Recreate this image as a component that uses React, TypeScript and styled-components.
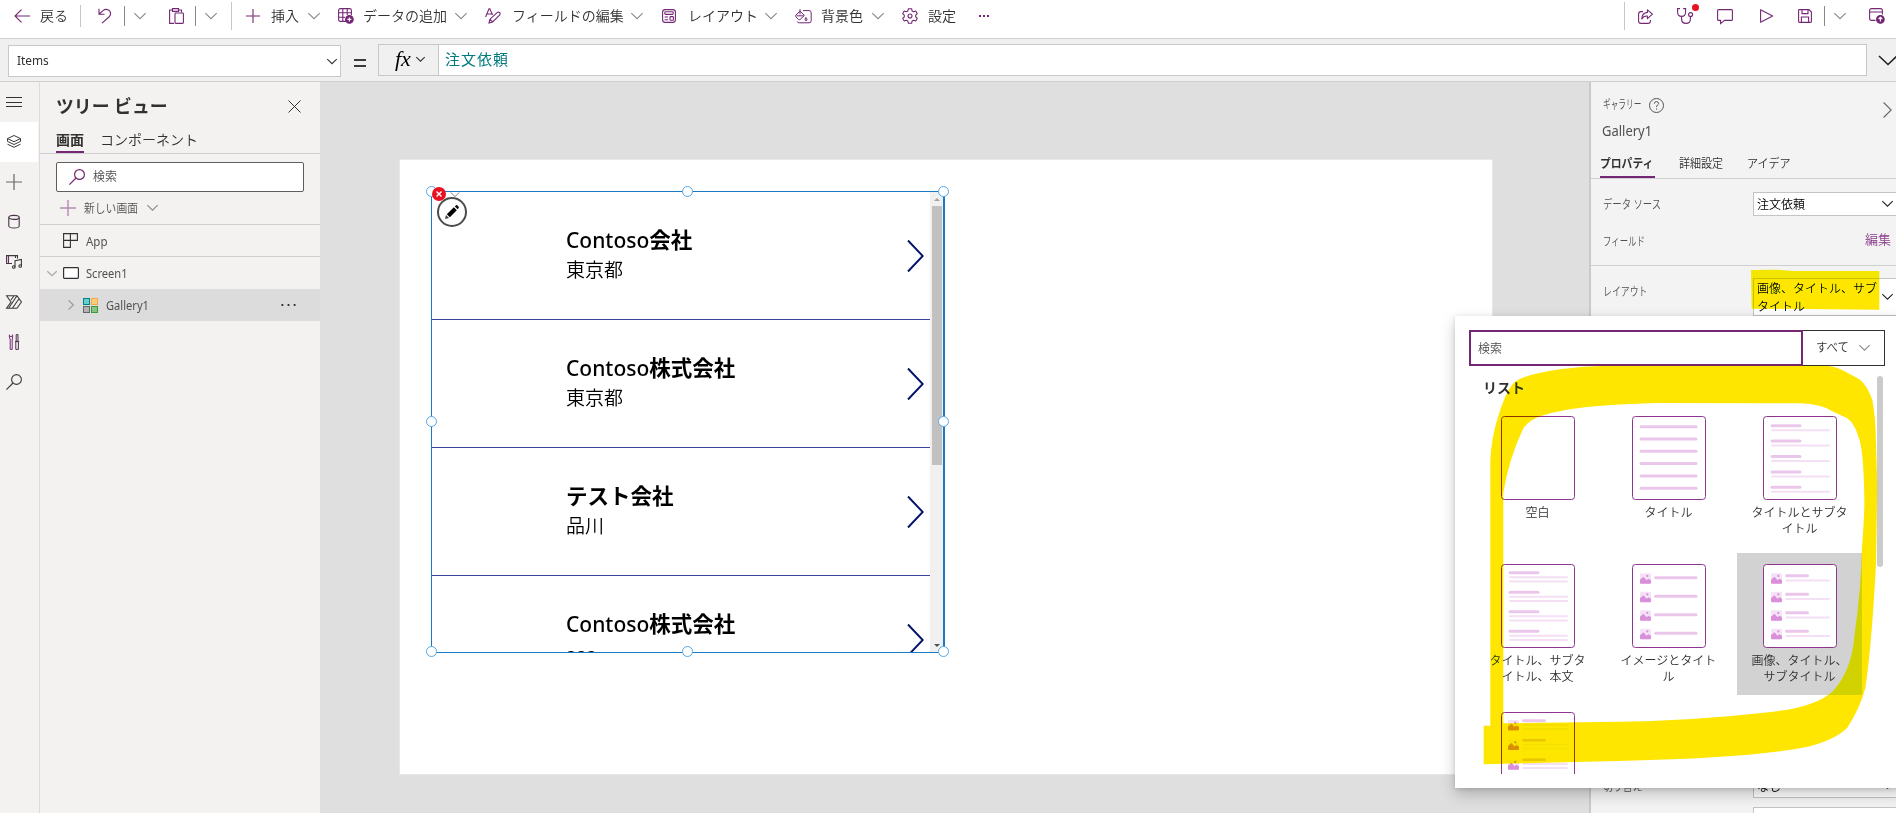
import React from "react";
import styled, { createGlobalStyle, css } from "styled-components";

const PURPLE = "#742774";
const JP = `"Noto Sans", "Noto Sans CJK JP", sans-serif`;

const Global = createGlobalStyle`
  *, *::before, *::after { box-sizing: border-box; }
  html, body { margin: 0; padding: 0; overflow: hidden; }
  body { font-family: ${JP}; color: #323130; font-size: 12px; }
`;

/* ---------- shared pieces ---------- */

const Text = styled.span<{ $size?: number; $color?: string; $weight?: number; $narrow?: number; $track?: number }>`
  display: inline-block;
  flex: none;
  white-space: nowrap;
  font-size: ${(p) => p.$size ?? 12}px;
  color: ${(p) => p.$color ?? "inherit"};
  font-weight: ${(p) => p.$weight ?? 350};
  letter-spacing: ${(p) => p.$track ?? 0}px;
  line-height: 1.3;
  transform-origin: left center;
  ${(p) => p.$narrow && css`transform: scaleX(${p.$narrow});`}
`;

const Svg = styled.svg<{ $ml?: number }>`
  display: block;
  flex: none;
  overflow: visible;
  margin-left: ${(p) => p.$ml ?? 0}px;
`;

type IconProps = { w: number; h?: number; color?: string; sw?: number; ml?: number; children: React.ReactNode };
const Icon = ({ w, h = w, color = PURPLE, sw = 1.1, ml, children }: IconProps) => (
  <Svg $ml={ml} width={w} height={h} viewBox={`0 0 ${w} ${h}`} fill="none" stroke={color} strokeWidth={sw}>
    {children}
  </Svg>
);

const Chevron = ({ w = 12, color = "#8a8a8a", sw = 1.1, ml = 0 }: { w?: number; color?: string; sw?: number; ml?: number }) => (
  <Icon w={w} h={w / 2} color={color} sw={sw} ml={ml}>
    <path d={`M0.3 0.2 L${w / 2} ${w / 2 - 0.3} L${w - 0.3} 0.2`} />
  </Icon>
);

/* ---------- frame ---------- */

const Frame = styled.div`
  position: relative;
  width: 1896px;
  height: 813px;
  display: grid;
  grid-template-rows: 39px 43px 731px;
  overflow: hidden;
  background: #fff;
`;

const CommandBar = styled.header`
  display: flex;
  justify-content: space-between;
  border-bottom: 1px solid #d0d0d0;
  background: #fff;
`;

const CommandGroup = styled.div<{ $pl?: number; $pr?: number }>`
  display: flex;
  align-items: center;
  height: 32px;
  padding-left: ${(p) => p.$pl ?? 0}px;
  padding-right: ${(p) => p.$pr ?? 0}px;
`;

const Slot = styled.div<{ $w: number }>`
  width: ${(p) => p.$w}px;
  height: 32px;
  flex: none;
  display: flex;
  align-items: center;
`;

const Divider = styled.i<{ $h: number; $color?: string }>`
  width: 1px;
  height: ${(p) => p.$h}px;
  background: ${(p) => p.$color ?? "#c8c6c4"};
`;

const Health = styled.div`
  position: relative;
  &::after {
    content: "";
    position: absolute;
    left: 15px;
    top: -4px;
    width: 7px;
    height: 7px;
    border-radius: 50%;
    background: #e81123;
  }
`;

const FormulaBar = styled.div`
  display: flex;
  align-items: flex-start;
  padding: 5px 0 0 8px;
  background: #f0f0f0;
  border-bottom: 1px solid #d0d0d0;
`;

const PropertyBox = styled.div`
  width: 333px;
  height: 32px;
  margin-top: 1px;
  padding: 0 3px 0 8px;
  display: flex;
  align-items: center;
  justify-content: space-between;
  border: 1px solid #c8c8c8;
  background: #fff;
`;

const EqualSign = styled.div`
  width: 12px;
  height: 8px;
  margin: 15px 12px 0 13px;
  border: solid #3a3a3a;
  border-width: 2px 0;
`;

const FxButton = styled.div`
  width: 61px;
  height: 32px;
  display: flex;
  align-items: center;
  border: 1px solid #c8c8c8;
  padding: 0 0 2px 16px;
  font: italic 400 22px "Liberation Serif", serif;
  color: #000;
`;

const FormulaInput = styled.div`
  width: 1429px;
  height: 32px;
  margin-left: -1px;
  padding: 0 6px;
  display: flex;
  align-items: center;
  border: 1px solid #c8c8c8;
  background: #fff;
`;

const Main = styled.main`
  display: grid;
  grid-template-columns: 40px 280px 1269px 307px;
  min-height: 0;
`;

/* ---------- left rail and tree ---------- */

const Rail = styled.nav`
  background: #f3f2f1;
  border-right: 1px solid #dcdcdc;
`;

const RailItem = styled.div<{ $active?: boolean }>`
  height: 40px;
  width: 38px;
  padding-left: 6px;
  display: flex;
  align-items: center;
  background: ${(p) => (p.$active ? "#fff" : "transparent")};
`;

const Tree = styled.aside`
  background: #f3f2f1;
  display: flex;
  flex-direction: column;
`;

const TreeHead = styled.div`
  height: 44px;
  padding: 5px 19px 0 16px;
  display: flex;
  align-items: center;
  justify-content: space-between;
`;

const TabStrip = styled.div<{ $h: number; $pl: number; $gap: number }>`
  height: ${(p) => p.$h}px;
  flex: none;
  padding-left: ${(p) => p.$pl}px;
  display: flex;
  gap: ${(p) => p.$gap}px;
  border-bottom: 1px solid #cfcfcf;
`;

const Tab = styled.div<{ $active?: boolean; $w: number; $pb?: number }>`
  width: ${(p) => p.$w}px;
  display: flex;
  align-items: flex-end;
  padding-bottom: ${(p) => (p.$pb ?? 2) + (p.$active ? 0 : 2)}px;
  border-bottom: ${(p) => (p.$active ? `2px solid ${PURPLE}` : "0")};
`;

const SearchField = styled.div`
  width: 248px;
  height: 30px;
  margin: 8px 0 0 16px;
  padding-left: 12px;
  display: flex;
  align-items: center;
  gap: 8px;
  border: 1px solid #605e5c;
  border-radius: 2px;
  background: #fff;
`;

const TreeRow = styled.div<{ $h: number; $pl: number; $line?: boolean; $active?: boolean }>`
  height: ${(p) => p.$h}px;
  flex: none;
  padding-left: ${(p) => p.$pl}px;
  display: flex;
  align-items: center;
  border-bottom: ${(p) => (p.$line ? "1px solid #cfcfcf" : "0")};
  background: ${(p) => (p.$active ? "#dcdcdc" : "transparent")};
`;

const RowName = styled.div<{ $ml: number; $pt?: number }>`
  margin-left: ${(p) => p.$ml}px;
  padding-top: ${(p) => p.$pt ?? 2}px;
  color: #505050;
`;

const More = styled.div`
  margin-left: auto;
  margin-right: 24px;
`;

/* ---------- canvas ---------- */

const Canvas = styled.section`
  position: relative;
  background: #dfdfdf;
  overflow: hidden;
`;

const Screen = styled.div`
  position: absolute;
  left: 79px;
  top: 77px;
  width: 1094px;
  height: 616px;
  background: #fff;
  border: 1px solid #e8e8e8;
`;

const Gallery = styled.div`
  position: absolute;
  left: 111px;
  top: 109px;
  width: 514px;
  height: 462px;
  border: 1px solid #1b78c4;
  border-right-width: 2px;
  background: #fff;
`;

const GalleryBody = styled.div`
  height: 100%;
  display: flex;
  overflow: hidden;
`;

const RowList = styled.div`
  width: 498px;
`;

const Row = styled.div`
  height: 128px;
  display: flex;
  justify-content: space-between;
  padding: 32px 6px 0 134px;
  border-bottom: 1px solid #38459a;
  color: #000;
`;

const RowText = styled.div`
  display: flex;
  flex-direction: column;
`;

const RowTitle = styled.div`
  font-size: 21px;
  font-weight: 500;
  line-height: 32px;
  height: 33px;
  white-space: nowrap;
  b { font-weight: 700; font-size: 21.5px; }
`;

const RowSub = styled.div`
  font-size: 19px;
  font-weight: 350;
  line-height: 27px;
  white-space: nowrap;
`;

const RowArrow = styled.div`
  margin-top: 1px;
`;

const ScrollTrack = styled.div`
  width: 13px;
  display: flex;
  flex-direction: column;
  align-items: center;
  background: #f0f0f0;
`;

const ScrollThumb = styled.div`
  width: 10px;
  height: 259px;
  margin: 5px 0 auto;
  background: #c1c1c1;
`;

const Caret = styled.div<{ $up?: boolean }>`
  border: 3px solid transparent;
  ${(p) => (p.$up
    ? css`border-bottom-color: #a3a3a3; margin-top: 3px;`
    : css`border-top-color: #505050; margin-bottom: 2px;`)}
`;

const Handle = styled.i<{ $x: number; $y: number }>`
  position: absolute;
  left: ${(p) => p.$x - 5.5}px;
  top: ${(p) => p.$y - 5.5}px;
  width: 11px;
  height: 11px;
  border: 1.5px solid #56a8e6;
  border-radius: 50%;
  background: #fff;
`;

const ErrorBadge = styled.div`
  position: absolute;
  left: 0;
  top: -5px;
  width: 14px;
  height: 14px;
  border-radius: 50%;
  background: #e81123;
  display: flex;
  align-items: center;
  justify-content: center;
`;

const EditButton = styled.div`
  position: absolute;
  left: 5px;
  top: 5px;
  width: 30px;
  height: 30px;
  border: 2px solid #4c4c4c;
  border-radius: 50%;
  background: #fff;
  display: flex;
  align-items: center;
  justify-content: center;
`;

const BadgeTail = styled.div`
  position: absolute;
  left: 18px;
  top: 0;
`;

/* ---------- property pane ---------- */

const Pane = styled.aside`
  background: #f3f3f3;
  border-left: 2px solid #cacaca;
  display: flex;
  flex-direction: column;
  color: #505050;
  overflow: hidden;
`;

const PaneHead = styled.div`
  height: 66px;
  flex: none;
  padding: 13px 4px 0 12px;
  display: flex;
  justify-content: space-between;
`;

const PaneTitle = styled.div`
  display: flex;
  align-items: center;
  height: 20px;
`;

const PaneName = styled.div`
  margin: 8px 0 0 -1px;
`;

const PaneRow = styled.div<{ $h: number; $line?: boolean }>`
  height: ${(p) => p.$h}px;
  flex: none;
  display: flex;
  align-items: center;
  padding-left: 12px;
  border-bottom: ${(p) => (p.$line ? "1px solid #cfcfcf" : "0")};
`;

const Label = styled.div<{ $pb?: number }>`
  width: 150px;
  flex: none;
  padding-bottom: ${(p) => p.$pb ?? 0}px;
`;

const Select = styled.div<{ $h: number }>`
  width: 150px;
  height: ${(p) => p.$h}px;
  flex: none;
  padding-left: 3px;
  display: flex;
  align-items: center;
  border: 1px solid #c4c4c4;
  background: #fff;
  color: #000;
`;

const SelectText = styled.div`
  width: 125px;
  padding-top: 1px;
  font-size: 12px;
  font-weight: 350;
  line-height: 18px;
  white-space: pre;
`;

const Fill = styled.div`
  height: 442px;
  flex: none;
`;

const EditLink = styled.div`
  margin-left: 112px;
  padding-bottom: 15px;
`;

/* ---------- layout picker ---------- */

const Popup = styled.div`
  position: absolute;
  left: 1455px;
  top: 316px;
  width: 450px;
  height: 472px;
  padding: 14px 0 14px 14px;
  background: #fff;
  box-shadow: 0 6px 14px rgba(0, 0, 0, 0.22), 0 1px 4px rgba(0, 0, 0, 0.12);
  display: flex;
  flex-direction: column;
`;

const PickerSearch = styled.div`
  display: flex;
  height: 36px;
  flex: none;
`;

const PickerInput = styled.div`
  width: 334px;
  padding: 1px 0 0 7px;
  display: flex;
  align-items: center;
  border: 2px solid ${PURPLE};
`;

const PickerFilter = styled.div`
  width: 82px;
  padding-left: 13px;
  display: flex;
  align-items: center;
  border: 1px solid #323130;
  border-left: 0;
`;

const PickerScroll = styled.div`
  flex: 1;
  min-height: 0;
  display: flex;
  overflow: hidden;
`;

const PickerContent = styled.div`
  width: 408px;
  padding: 11px 0 0 6px;
`;

const PickerTitle = styled.div`
  height: 28px;
  padding-left: 8px;
  line-height: 24px;
`;

const TileGrid = styled.div`
  display: grid;
  grid-template-columns: repeat(3, 125px);
  grid-auto-rows: 142px;
  gap: 6px;
`;

const Tile = styled.div<{ $active?: boolean }>`
  padding-top: 11px;
  display: flex;
  flex-direction: column;
  align-items: center;
  background: ${(p) => (p.$active ? "#d2d2d2" : "transparent")};
`;

const TileCaption = styled.div`
  margin-top: 5px;
  font-size: 12px;
  font-weight: 350;
  line-height: 16px;
  text-align: center;
  white-space: pre;
`;

const PickerBar = styled.i`
  width: 6px;
  height: 191px;
  margin-top: 10px;
  border-radius: 3px;
  background: #cbcbcb;
`;

const Marker = styled.svg`
  position: absolute;
  left: 1440px;
  top: 300px;
  overflow: visible;
  mix-blend-mode: darken;
  pointer-events: none;
`;

/* ---------- thumbnails ---------- */

type Kind = "blank" | "title" | "titleSub" | "titleSubBody" | "imgTitle" | "imgTitleSub" | "imgTitleSubBody";

const Bar = ({ x, y, w, thin }: { x: number; y: number; w: number; thin?: boolean }) => (
  <line x1={x + 1} x2={x + w - 1} y1={y} y2={y} stroke={thin ? "#f4dff4" : "#ebc6eb"} strokeWidth={thin ? 2 : 3} strokeLinecap="round" />
);

const Pic = ({ x, y }: { x: number; y: number }) => (
  <g stroke="none">
    <rect x={x} y={y} width="11" height="10.5" rx="1" fill="#f6e2f6" />
    <path d={`M${x} ${y + 6.5} L${x + 3.5} ${y + 3.5} L${x + 6.5} ${y + 7} L${x + 8.5} ${y + 5.5} L${x + 11} ${y + 7} V${y + 9.5} Q${x + 11} ${y + 10.5} ${x + 10} ${y + 10.5} H${x + 1} Q${x} ${y + 10.5} ${x} ${y + 9.5} Z`} fill="#d98fd9" />
    <circle cx={x + 7.3} cy={y + 2.7} r="1.1" fill="#d98fd9" />
  </g>
);

const Thumb = ({ kind }: { kind: Kind }) => (
  <Icon w={74} h={84} color="#8f3592" sw={1}>
    <rect x="0.5" y="0.5" width="73" height="83" rx="3" fill="#fff" />
    {kind === "title" && [0, 1, 2, 3, 4, 5].map((i) => <Bar key={i} x={8} y={10.7 + i * 12.3} w={57} />)}
    {kind === "titleSub" && [0, 1, 2, 3, 4].map((i) => (
      <g key={i}><Bar x={8} y={9.7 + i * 15.4} w={30} /><Bar thin x={8} y={14.2 + i * 15.4} w={59} /></g>
    ))}
    {kind === "titleSubBody" && [0, 1, 2, 3].map((i) => (
      <g key={i}><Bar x={8} y={8.7 + i * 19.5} w={30} /><Bar thin x={8} y={13.3 + i * 19.5} w={59} /><Bar thin x={8} y={17.5 + i * 19.5} w={59} /></g>
    ))}
    {kind === "imgTitle" && [0, 1, 2, 3].map((i) => (
      <g key={i}><Pic x={8} y={9.2 + i * 18.5} /><Bar x={22.5} y={13.7 + i * 18.5} w={42.5} /></g>
    ))}
    {kind === "imgTitleSub" && [0, 1, 2, 3].map((i) => (
      <g key={i}><Pic x={8} y={9.2 + i * 18.5} /><Bar x={22.5} y={11.7 + i * 18.5} w={23} /><Bar thin x={22.5} y={16.4 + i * 18.5} w={44.5} /></g>
    ))}
    {kind === "imgTitleSubBody" && [0, 1, 2, 3].map((i) => (
      <g key={i}><Pic x={7} y={8 + i * 19.6} /><Bar x={21.5} y={8.7 + i * 19.5} w={23} /><Bar thin x={21.5} y={13 + i * 19.5} w={45.5} /><Bar thin x={21.5} y={17 + i * 19.5} w={45.5} /></g>
    ))}
  </Icon>
);

/* ---------- data ---------- */

const rows = [
  { latin: "Contoso", name: "会社", sub: "東京都" },
  { latin: "Contoso", name: "株式会社", sub: "東京都" },
  { latin: "", name: "テスト会社", sub: "品川" },
  { latin: "Contoso", name: "株式会社", sub: "aaa" },
];

const tiles: { kind: Kind; caption: string; active?: boolean }[] = [
  { kind: "blank", caption: "空白" },
  { kind: "title", caption: "タイトル" },
  { kind: "titleSub", caption: "タイトルとサブタ\nイトル" },
  { kind: "titleSubBody", caption: "タイトル、サブタ\nイトル、本文" },
  { kind: "imgTitle", caption: "イメージとタイト\nル" },
  { kind: "imgTitleSub", caption: "画像、タイトル、\nサブタイトル", active: true },
  { kind: "imgTitleSubBody", caption: "" },
];

/* ---------- sections ---------- */

const Commands = () => (
  <CommandBar>
    <CommandGroup $pl={14}>
      <Slot $w={26}><Icon w={16} h={14}><path d="M16 7 H1 M7.5 0.6 L1 7 L7.5 13.4" /></Icon></Slot>
      <Slot $w={40}><Text $size={14}>戻る</Text></Slot>
      <Slot $w={18}><Divider $h={22} /></Slot>
      <Slot $w={26}><Icon w={14} h={16}><path d="M1 0.8 V6.3 H6.5 M1.2 6 L5 2.6 C8 0.2 12.6 1.6 12.6 5.6 C12.6 7 12 8 11 9 L4 15.2" /></Icon></Slot>
      <Slot $w={10}><Divider $h={20} $color="#8a8886" /></Slot>
      <Slot $w={35}><Chevron /></Slot>
      <Slot $w={26}>
        <Icon w={15} h={16}><path d="M5 15.4 H0.6 V2 H3.5 M9.5 2 H12.5 V4.5 M3.5 0.6 H9.5 V3.4 H3.5 Z" /><rect x="6" y="5" width="8.4" height="10.4" rx="0.8" /></Icon>
      </Slot>
      <Slot $w={10}><Divider $h={20} $color="#8a8886" /></Slot>
      <Slot $w={26}><Chevron /></Slot>
      <Slot $w={15}><Divider $h={28} /></Slot>
      <Slot $w={25}><Icon w={14}><path d="M7 0 V14 M0 7 H14" /></Icon></Slot>
      <Slot $w={37}><Text $size={14}>挿入</Text></Slot>
      <Slot $w={30}><Chevron /></Slot>
      <Slot $w={25}>
        <Icon w={16}>
          <path d="M8 13.4 H2.5 Q0.6 13.4 0.6 11.5 V2.5 Q0.6 0.6 2.5 0.6 H11.5 Q13.4 0.6 13.4 2.5 V7 M0.6 4.8 H13.4 M0.6 9.2 H7 M4.8 0.6 V13.4 M9.2 0.6 V7" />
          <circle cx="11.4" cy="11.4" r="3.8" fill={PURPLE} /><path d="M11.4 9.4 V13.4 M9.4 11.4 H13.4" stroke="#fff" />
        </Icon>
      </Slot>
      <Slot $w={92}><Text $size={14}>データの追加</Text></Slot>
      <Slot $w={30}><Chevron /></Slot>
      <Slot $w={27}>
        <Icon w={16}><path d="M0.6 9 L4 0.8 H4.8 L7.6 7 M2 6 H6.6 M4 15 L5 11.2 L12.4 4.4 Q13.6 3.6 14.7 4.7 Q15.7 5.9 14.8 7 L7.6 14 Z M5 11.2 L7.6 14" /></Icon>
      </Slot>
      <Slot $w={119}><Text $size={14}>フィールドの編集</Text></Slot>
      <Slot $w={31}><Chevron /></Slot>
      <Slot $w={26}>
        <Icon w={14}><rect x="0.6" y="0.6" width="12.8" height="12.8" rx="2.6" /><rect x="2.8" y="2.8" width="8.4" height="2.6" rx="0.8" /><path d="M2.6 8 H6 M2.6 10.8 H6" /><rect x="8" y="7.6" width="3.4" height="3.6" rx="0.8" /></Icon>
      </Slot>
      <Slot $w={77}><Text $size={14}>レイアウト</Text></Slot>
      <Slot $w={30}><Chevron /></Slot>
      <Slot $w={26}>
        <Icon w={17} h={15}><path d="M1 6 L5 2.2 L9.4 6.4 L5 10.6 Q4.2 11 3.4 10.4 L1 8 Q0.2 7 1 6 Z M2 6.8 L8.6 6.8 M5 5.4 V0.2 M10.8 8.5 Q9.6 10.2 10.2 11.2 Q11.2 12 12 11.2 Q12.4 10 10.8 8.5 M8 1.6 H14 Q16.2 1.6 16.2 3.8 V11.6 Q16.2 13.8 14 13.8 H4.2 Q2.6 13.8 2.2 12.4" strokeWidth="1" /></Icon>
      </Slot>
      <Slot $w={51}><Text $size={14}>背景色</Text></Slot>
      <Slot $w={30}><Chevron /></Slot>
      <Slot $w={26}>
        <Icon w={16}>
          <path d="M6.4 0.7 H9.6 L10.1 2.9 L11.6 3.7 L13.8 3 L15.3 5.7 L13.7 7.2 V8.8 L15.3 10.3 L13.8 13 L11.6 12.3 L10.1 13.1 L9.6 15.3 H6.4 L5.9 13.1 L4.4 12.3 L2.2 13 L0.7 10.3 L2.3 8.8 V7.2 L0.7 5.7 L2.2 3 L4.4 3.7 L5.9 2.9 Z" strokeLinejoin="round" />
          <circle cx="8" cy="8" r="2" />
        </Icon>
      </Slot>
      <Slot $w={51}><Text $size={14}>設定</Text></Slot>
      <Icon w={10} h={2}><path d="M0 1 H2 M4 1 H6 M8 1 H10" strokeWidth="1.8" /></Icon>
    </CommandGroup>
    <CommandGroup $pr={12}>
      <Slot $w={14}><Divider $h={28} /></Slot>
      <Slot $w={39}>
        <Icon w={15}><path d="M5 2.6 H3 Q0.6 2.6 0.6 5 V12 Q0.6 14.4 3 14.4 H10 Q12.4 14.4 12.4 12 V11 M9.4 0.8 L14.4 5.2 L9.4 9.6 V7 Q5.6 6.6 3.8 10 Q4 4 9.4 3.4 Z" strokeLinejoin="round" /></Icon>
      </Slot>
      <Slot $w={40}>
        <Health>
          <Icon w={17} h={16}><path d="M3 0.6 H0.6 V4 Q0.6 8.4 4.6 8.4 Q8.6 8.4 8.6 4 V0.6 H6.2 M4.6 8.4 V11.4 Q4.8 15.4 9 15.4 Q13.4 15.4 13.4 11 V8.6" /><circle cx="13.6" cy="6.6" r="2" /></Icon>
        </Health>
      </Slot>
      <Slot $w={43}><Icon w={16}><path d="M1.6 1.6 H14.4 Q15.4 1.6 15.4 2.6 V11.4 Q15.4 12.4 14.4 12.4 H7.5 L3.6 15.6 V12.4 H1.6 Q0.6 12.4 0.6 11.4 V2.6 Q0.6 1.6 1.6 1.6 Z" /></Icon></Slot>
      <Slot $w={38}><Icon w={13} h={14}><path d="M0.6 0.8 L12.6 7 L0.6 13.2 Z" strokeLinejoin="round" /></Icon></Slot>
      <Slot $w={26}><Icon w={14}><path d="M0.6 1.4 V12.6 Q0.6 13.4 1.4 13.4 H12.6 Q13.4 13.4 13.4 12.6 V3 L11 0.6 H1.4 Q0.6 0.6 0.6 1.4 M4 0.6 V4.6 H10 V0.6 M3.4 13.4 V8 H10.6 V13.4" /></Icon></Slot>
      <Slot $w={10}><Divider $h={20} $color="#8a8886" /></Slot>
      <Slot $w={35}><Chevron /></Slot>
      <Icon w={16}><path d="M6.5 12.4 H2.6 Q0.6 12.4 0.6 10.4 V2.6 Q0.6 0.6 2.6 0.6 H11.4 Q13.4 0.6 13.4 2.6 V6.5 M0.6 4 H13.4" /><circle cx="11.4" cy="11.4" r="3.8" fill={PURPLE} /><path d="M11.4 13.6 V9.4 M9.6 11 L11.4 9.2 L13.2 11" stroke="#fff" /></Icon>
    </CommandGroup>
  </CommandBar>
);

const Formula = () => (
  <FormulaBar>
    <PropertyBox><Text $size={12.5} $narrow={0.95} $weight={400}>Items</Text><Chevron w={10} color="#333" /></PropertyBox>
    <EqualSign />
    <FxButton>fx<Chevron w={9} color="#333" ml={5} /></FxButton>
    <FormulaInput><Text $size={15} $color="#007a7c" $weight={400} $track={1}>注文依頼</Text></FormulaInput>
    <Svg $ml={12} width="18" height="32" viewBox="0 0 18 32" fill="none" stroke="#222" strokeWidth="1.6"><path d="M0 12 L9 20.5 L18 12" /></Svg>
  </FormulaBar>
);

const LeftRail = () => (
  <Rail>
    <RailItem><Icon w={16} h={10} color="#333" sw={1}><path d="M0 0.5 H16 M0 5.5 H16 M0 9.5 H16" /></Icon></RailItem>
    <RailItem $active>
      <Icon w={16} color="#3b3a39" sw={1}><path d="M8 1.5 L14.5 4.6 L8 7.7 L1.5 4.6 Z M1.5 7.4 L8 10.5 L14.5 7.4 M1.5 10.2 L8 13.3 L14.5 10.2 M1.5 4.6 V7.4 M14.5 4.6 V7.4" /></Icon>
    </RailItem>
    <RailItem><Icon w={16} color="#666" sw={1.2}><path d="M8 0 V16 M0 8 H16" /></Icon></RailItem>
    <RailItem><Icon w={16} color="#4a3048" sw={1.1}><ellipse cx="8" cy="3.4" rx="5.2" ry="2" /><path d="M2.8 3.4 V12 Q3 14 8 14 Q13 14 13.2 12 V3.4" /></Icon></RailItem>
    <RailItem>
      <Icon w={16} color="#3b3a39" sw={1.1}><path d="M6 9.5 H0.6 V1.6 H11.5 V4.5 M9.5 1.6 V4" /><path d="M2.5 1.6 V9.5" stroke={PURPLE} /><path d="M9 13 V6.6 L15.4 5.4 V12" /><circle cx="7.8" cy="13" r="1.3" /><circle cx="14.2" cy="12" r="1.3" /></Icon>
    </RailItem>
    <RailItem>
      <Icon w={16} h={14} color="#3b3a39" sw={1.1}><path d="M0.6 0.8 H11 L15.4 7 L11 13.2 H0.6 L5 7 Z M8 0.8 L5 5 M11 0.8 L2.6 13.2 M13 3.8 L6.4 13.2" /></Icon>
    </RailItem>
    <RailItem>
      <Icon w={16} color="#4a3048" sw={1}><path d="M3.4 0.6 V2.4 H6.6 V0.6 M3.4 2.4 Q3.4 4.4 4.2 5 V15.4 H6.2 V5 Q6.8 4.4 6.6 2.4" stroke={PURPLE} /><path d="M9 7.6 H13.2 M10.2 0.6 H12 V7.4 H10.2 Z M9.8 8 V15.4 H12.4 V8" /></Icon>
    </RailItem>
    <RailItem><Icon w={16} color="#3b3a39" sw={1.1}><circle cx="10.5" cy="5.5" r="4.9" /><path d="M7 9 L0.4 15.6" /></Icon></RailItem>
  </Rail>
);

const TreeView = () => (
  <Tree>
    <TreeHead>
      <Text $size={18} $weight={700} $narrow={0.99}>ツリー ビュー</Text>
      <Icon w={13} color="#333" sw={1}><path d="M0.5 0.5 L12.5 12.5 M12.5 0.5 L0.5 12.5" /></Icon>
    </TreeHead>
    <TabStrip $h={28} $pl={16} $gap={16}>
      <Tab $active $w={28}><Text $size={14} $weight={700}>画面</Text></Tab>
      <Tab $w={98}><Text $size={14}>コンポーネント</Text></Tab>
    </TabStrip>
    <SearchField>
      <Icon w={16} sw={1.2}><circle cx="10.5" cy="5.5" r="4.9" /><path d="M7 9 L0.4 15.6" /></Icon>
      <Text $color="#505050">検索</Text>
    </SearchField>
    <TreeRow $h={33} $pl={20} $line>
      <Icon w={16} color="#b58ab5" sw={1.4}><path d="M8 0 V16 M0 8 H16" /></Icon>
      <RowName $ml={8} $pt={1}><Text $narrow={0.9}>新しい画面</Text></RowName>
      <Chevron w={11} ml={3} />
    </TreeRow>
    <TreeRow $h={32} $pl={23} $line>
      <Icon w={15} color="#323130" sw={1.1}><path d="M0.6 0.6 H14.4 V7.4 H7.4 V14.4 H0.6 Z M7.4 0.6 V7.4 H0.6" /></Icon>
      <RowName $ml={8}><Text $weight={400} $size={12.5} $narrow={0.92}>App</Text></RowName>
    </TreeRow>
    <TreeRow $h={32} $pl={7}>
      <Chevron w={10} color="#aaa" sw={1.3} />
      <Icon w={16} h={12} color="#323130" sw={1.2} ml={6}><rect x="0.6" y="0.6" width="14.8" height="10.8" rx="0.8" fill="#fff" /></Icon>
      <RowName $ml={7}><Text $weight={400} $size={12.5} $narrow={0.89}>Screen1</Text></RowName>
    </TreeRow>
    <TreeRow $h={32} $pl={28} $active>
      <Icon w={6} h={10} color="#999" sw={1.2}><path d="M0.5 0.4 L5.4 5 L0.5 9.6" /></Icon>
      <Icon w={15} ml={9} sw={1}>
        <rect x="0.5" y="0.5" width="6" height="6" fill="#69cccd" stroke="#038387" />
        <rect x="8.5" y="0.5" width="6" height="6" fill="#ffcc80" stroke="#f2a840" />
        <rect x="0.5" y="8.5" width="6" height="6" fill="#b3b3b3" stroke="#666" />
        <rect x="8.5" y="8.5" width="6" height="6" fill="#86c486" stroke="#3c9a3c" />
      </Icon>
      <RowName $ml={8}><Text $weight={400} $size={12.5} $narrow={0.89}>Gallery1</Text></RowName>
      <More><Icon w={15} h={2} color="#323130"><path d="M0.5 1 H2.3 M6.6 1 H8.4 M12.7 1 H14.5" strokeWidth="1.8" /></Icon></More>
    </TreeRow>
  </Tree>
);

const Stage = () => (
  <Canvas>
    <Screen />
    <Gallery>
      <GalleryBody>
        <RowList>
          {rows.map((r, i) => (
            <Row key={i}>
              <RowText>
                <RowTitle>{r.latin}<b>{r.name}</b></RowTitle>
                <RowSub>{r.sub}</RowSub>
              </RowText>
              <RowArrow>
                <Svg width="17" height="62" viewBox="0 0 17 62" fill="none" stroke="#00126b" strokeWidth="1.9"><path d="M1 15.5 L15.7 31 L1 46.5" /></Svg>
              </RowArrow>
            </Row>
          ))}
        </RowList>
        <ScrollTrack><Caret $up /><ScrollThumb /><Caret /></ScrollTrack>
      </GalleryBody>
      {[-0.5, 255.5, 511.5].map((x, i) => [-0.5, 229.5, 459.5].map((y, j) => (i === 1 && j === 1 ? null : <Handle key={`${i}-${j}`} $x={x} $y={y} />)))}
      <BadgeTail><Icon w={10} h={5} color="#777" sw={0.9}><path d="M0.5 0.3 L5 4.5 L9.5 0.3" /></Icon></BadgeTail>
      <ErrorBadge><Icon w={6} color="#fff" sw={1.4}><path d="M0.5 0.5 L5.5 5.5 M5.5 0.5 L0.5 5.5" /></Icon></ErrorBadge>
      <EditButton>
        <Icon w={14} color="#111" sw={0}><path d="M0 14 L1 10 L4 13 Z" fill="#444" /><path d="M1.8 9.2 L8.8 2.2 L11.8 5.2 L4.8 12.2 Z" fill="#000" /><path d="M9.8 1.4 L11 0.2 Q12 -0.2 13 0.9 Q14.2 2 13.8 3 L12.6 4.2 Z" fill="#111" /></Icon>
      </EditButton>
    </Gallery>
  </Canvas>
);

const Properties = () => (
  <Pane>
    <PaneHead>
      <div>
        <PaneTitle>
          <Text $narrow={0.64}>ギャラリー</Text>
          <Svg $ml={-14} width="15" height="15" viewBox="0 0 15 15" fill="none" stroke="#555" strokeWidth="1"><circle cx="7.5" cy="7.5" r="7" /><path d="M5.3 5.6 Q5.4 3.6 7.5 3.6 Q9.7 3.7 9.6 5.6 Q9.5 6.5 8.5 7.1 Q7.5 7.8 7.5 9 M7.5 10.4 V11.6" /></Svg>
        </PaneTitle>
        <PaneName><Text $weight={400} $size={13.5} $narrow={0.96}>Gallery1</Text></PaneName>
      </div>
      <Svg width="9" height="34" viewBox="0 0 9 34" fill="none" stroke="#666" strokeWidth="1.1"><path d="M0.6 7.5 L8.2 15 L0.6 22.5" /></Svg>
    </PaneHead>
    <TabStrip $h={31} $pl={9} $gap={24}>
      <Tab $active $w={55} $pb={4}><Text $weight={700} $color="#323130" $narrow={0.9}>プロパティ</Text></Tab>
      <Tab $w={44} $pb={4}><Text $color="#323130" $narrow={0.92}>詳細設定</Text></Tab>
      <Tab $w={44} $pb={4}><Text $color="#323130" $narrow={0.92}>アイデア</Text></Tab>
    </TabStrip>
    <PaneRow $h={50}>
      <Label><Text $narrow={0.78}>データ ソース</Text></Label>
      <Select $h={24}><SelectText>注文依頼</SelectText><Chevron w={11} color="#222" /></Select>
    </PaneRow>
    <PaneRow $h={37} $line>
      <Label $pb={11}><Text $narrow={0.7}>フィールド</Text></Label>
      <EditLink><Text $size={13} $color="#8a3f8a">編集</Text></EditLink>
    </PaneRow>
    <PaneRow $h={62}>
      <Label $pb={11}><Text $narrow={0.74}>レイアウト</Text></Label>
      <Select $h={38}><SelectText>{"画像、タイトル、サブ\nタイトル"}</SelectText><Chevron w={11} color="#222" /></Select>
    </PaneRow>
    <Fill />
    <PaneRow $h={32}>
      <Label><Text $narrow={0.82}>切り替え</Text></Label>
      <Select $h={24}><SelectText>なし</SelectText><Chevron w={11} color="#222" /></Select>
    </PaneRow>
    <PaneRow $h={34}>
      <Label><Text $narrow={0.85}>表示モード</Text></Label>
      <Select $h={24}><SelectText>編集</SelectText><Chevron w={11} color="#222" /></Select>
    </PaneRow>
  </Pane>
);

const LayoutPicker = () => (
  <Popup>
    <PickerSearch>
      <PickerInput><Text $color="#505050">検索</Text></PickerInput>
      <PickerFilter><Text $narrow={0.95}>すべて</Text><Chevron w={11} ml={8} /></PickerFilter>
    </PickerSearch>
    <PickerScroll>
      <PickerContent>
        <PickerTitle><Text $size={14} $weight={700}>リスト</Text></PickerTitle>
        <TileGrid>
          {tiles.map((t) => (
            <Tile key={t.kind} $active={t.active}>
              <Thumb kind={t.kind} />
              <TileCaption>{t.caption}</TileCaption>
            </Tile>
          ))}
        </TileGrid>
      </PickerContent>
      <PickerBar />
    </PickerScroll>
  </Popup>
);

const HighlighterMarks = () => (
  <Marker width="456" height="513" viewBox="0 0 1368 1539" fill="#ffe600">
    <path d="M933 -90 L1010 -91 L1060 -87 L1318 -87 V29 L935 26 Z" />
    <path
      fillRule="evenodd"
      d="M131 1277 H151 V480 C155 410 170 360 186 315 Q205 262 225 245 Q260 222 360 208 Q430 198 500 197 H1160 Q1195 200 1225 220 L1258 238 Q1280 253 1297 300 Q1307 350 1308 430 L1312 560 L1308 790 C1300 950 1288 1090 1276 1165 Q1260 1225 1222 1283 Q1180 1325 1080 1345 Q900 1375 560 1382 L131 1393 Z
         M190 1270 L540 1265 Q760 1262 1000 1235 Q1130 1220 1180 1172 Q1235 1110 1243 1010 Q1264 860 1266 740 Q1274 640 1273 590 Q1270 440 1255 410 Q1244 372 1222 355 L1180 335 Q1145 312 1080 310 L650 309 Q400 315 310 346 Q268 358 250 385 Q205 480 190 580 Z"
    />
  </Marker>
);

export default function App() {
  return (
    <Frame>
      <Global />
      <Commands />
      <Formula />
      <Main>
        <LeftRail />
        <TreeView />
        <Stage />
        <Properties />
      </Main>
      <LayoutPicker />
      <HighlighterMarks />
    </Frame>
  );
}
